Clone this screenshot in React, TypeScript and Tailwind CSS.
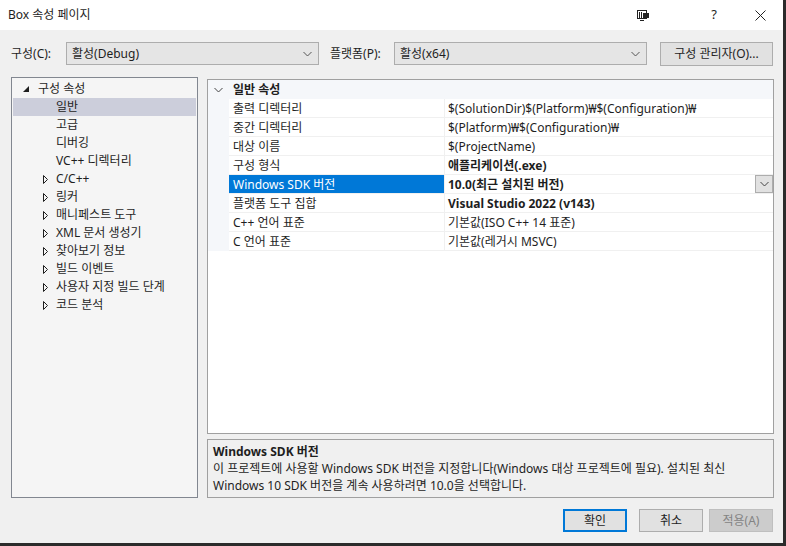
import React from 'react';

const font = "font-['Noto_Sans','Noto_Sans_CJK_KR',sans-serif]";

const Chevron: React.FC<{ className?: string }> = ({ className }) => (
  <svg className={className} width="9" height="6" viewBox="0 0 9 6" fill="none">
    <polyline points="0.5,1 4.5,5 8.5,1" stroke="currentColor" strokeWidth="1" />
  </svg>
);

const PinIcon: React.FC = () => (
  <svg width="12" height="11" viewBox="0 0 12 11" fill="none">
    <rect x="0.5" y="0.5" width="9" height="8" stroke="#222" />
    <line x1="2.5" y1="2" x2="2.5" y2="8" stroke="#222" />
    <line x1="4.5" y1="2" x2="4.5" y2="8" stroke="#222" />
    <rect x="6" y="3" width="6" height="5" fill="#222" />
    <line x1="3" y1="10.5" x2="7" y2="10.5" stroke="#222" />
  </svg>
);

const Expanded: React.FC = () => (
  <svg width="6" height="6" viewBox="0 0 6 6">
    <polygon points="6,0 6,6 0,6" fill="#1e1e1e" />
  </svg>
);

const Collapsed: React.FC = () => (
  <svg width="5" height="9" viewBox="0 0 5 9" fill="none">
    <polygon points="0.5,0.5 4.5,4.5 0.5,8.5" stroke="#1e1e1e" strokeWidth="1" />
  </svg>
);

const treeItems: { label: string; arrow: boolean; selected?: boolean }[] = [
  { label: '일반', arrow: false, selected: true },
  { label: '고급', arrow: false },
  { label: '디버깅', arrow: false },
  { label: 'VC++ 디렉터리', arrow: false },
  { label: 'C/C++', arrow: true },
  { label: '링커', arrow: true },
  { label: '매니페스트 도구', arrow: true },
  { label: 'XML 문서 생성기', arrow: true },
  { label: '찾아보기 정보', arrow: true },
  { label: '빌드 이벤트', arrow: true },
  { label: '사용자 지정 빌드 단계', arrow: true },
  { label: '코드 분석', arrow: true },
];

const props: { name: string; value: string; bold?: boolean; selected?: boolean }[] = [
  { name: '출력 디렉터리', value: '$(SolutionDir)$(Platform)₩$(Configuration)₩' },
  { name: '중간 디렉터리', value: '$(Platform)₩$(Configuration)₩' },
  { name: '대상 이름', value: '$(ProjectName)' },
  { name: '구성 형식', value: '애플리케이션(.exe)', bold: true },
  { name: 'Windows SDK 버전', value: '10.0(최근 설치된 버전)', bold: true, selected: true },
  { name: '플랫폼 도구 집합', value: 'Visual Studio 2022 (v143)', bold: true },
  { name: 'C++ 언어 표준', value: '기본값(ISO C++ 14 표준)' },
  { name: 'C 언어 표준', value: '기본값(레거시 MSVC)' },
];

export default function App() {
  return (
    <div className={`w-[786px] h-[546px] bg-[#2b2b2b] ${font} text-[12px] text-[#1e1e1e]`}>
      <div className="w-[783px] h-[543px] bg-[#f0f0f0] flex flex-col">
        {/* title bar */}
        <div className="h-[30px] bg-white flex items-center pl-[8px] shrink-0">
          <span className="flex-1 leading-none">Box 속성 페이지</span>
          <div className="w-[12px] flex justify-center mr-[62px]">
            <PinIcon />
          </div>
          <span className="text-[13px] mr-[38px]">?</span>
          <svg className="mr-[17px]" width="11" height="11" viewBox="0 0 11 11" fill="none">
            <path d="M0.5 0.5 L10.5 10.5 M10.5 0.5 L0.5 10.5" stroke="#222" strokeWidth="1" />
          </svg>
        </div>

        {/* config row */}
        <div className="flex items-center mt-[12px] h-[23px] pl-[11px]">
          <span className="w-[55px]">구성(C):</span>
          <div className="w-[253px] h-[23px] bg-[#e5e5e5] border border-[#adadad] flex items-center pl-[5px] pr-[6px]">
            <span className="flex-1">활성(Debug)</span>
            <Chevron className="text-[#555]" />
          </div>
          <span className="w-[64px] ml-[11px]">플랫폼(P):</span>
          <div className="w-[253px] h-[23px] bg-[#e5e5e5] border border-[#adadad] flex items-center pl-[5px] pr-[6px]">
            <span className="flex-1">활성(x64)</span>
            <Chevron className="text-[#555]" />
          </div>
          <button className="ml-[13px] w-[113px] h-[24px] bg-[#e1e1e1] border border-[#adadad] flex items-center justify-center">
            구성 관리자(O)...
          </button>
        </div>

        {/* main area */}
        <div className="flex mt-[12px] pl-[11px] h-[421px]">
          {/* tree */}
          <div className="w-[187px] h-[421px] border border-[#828790] bg-[#f5f5f5] pt-[2px] px-[1px]">
            <div className="h-[18px] flex items-center">
              <span className="w-[10px] ml-[10px] flex items-center">
                <Expanded />
              </span>
              <span className="ml-[5px]">구성 속성</span>
            </div>
            {treeItems.map((t) => (
              <div
                key={t.label}
                className={`h-[18px] flex items-center ${t.selected ? 'bg-[#cccedb]' : ''}`}
              >
                <span className="w-[5px] ml-[30px] flex items-center">{t.arrow && <Collapsed />}</span>
                <span className="ml-[8px]">{t.label}</span>
              </div>
            ))}
          </div>

          {/* right column */}
          <div className="ml-[9px] w-[567px] flex flex-col">
            <div className="h-[355px] mt-[2px] border border-[#a0a0a0] bg-white flex flex-col">
              <div className="h-[19px] bg-[#f5f7fa] flex items-center pt-[1px]">
                <span className="w-[21px] flex justify-center">
                  <Chevron className="text-[#444]" />
                </span>
                <span className="ml-[4px] font-bold">일반 속성</span>
              </div>
              {props.map((p) => (
                <div key={p.name} className="h-[19px] flex">
                  <div className="w-[21px] bg-[#f5f7fa]" />
                  <div
                    className={`w-[215px] border-b border-[#f0f0f0] flex items-center pl-[4px] pt-[1px] ${
                      p.selected ? 'bg-[#0078d7] text-white border-[#0078d7]' : ''
                    }`}
                  >
                    {p.name}
                  </div>
                  <div className="w-[1px] bg-[#f0f0f0]" />
                  <div className={`flex-1 border-b border-[#f0f0f0] flex items-center pl-[3px] ${p.bold ? 'font-bold' : ''}`}>
                    <span className="flex-1 pt-[1px]">{p.value}</span>
                    {p.selected && (
                      <span className="w-[18px] h-[18px] bg-[#e1e1e1] border border-[#adadad] flex items-center justify-center">
                        <Chevron className="text-[#444]" />
                      </span>
                    )}
                  </div>
                </div>
              ))}
              <div className="flex-1" />
            </div>

            <div className="mt-[5px] h-[59px] border border-[#a0a0a0] bg-[#f0f0f0] px-[5px] pt-[3px] leading-[17px]">
              <div className="font-bold">Windows SDK 버전</div>
              <div>
                이 프로젝트에 사용할 Windows SDK 버전을 지정합니다(Windows 대상 프로젝트에 필요). 설치된 최신
              </div>
              <div>Windows 10 SDK 버전을 계속 사용하려면 10.0을 선택합니다.</div>
            </div>
          </div>
        </div>

        {/* buttons */}
        <div className="flex justify-end mt-[11px] pr-[10px] gap-[12px]">
          <button className="w-[64px] h-[23px] bg-[#e1e1e1] border-2 border-[#0078d7] flex items-center justify-center">
            확인
          </button>
          <button className="w-[64px] h-[23px] bg-[#e1e1e1] border border-[#adadad] flex items-center justify-center">
            취소
          </button>
          <button className="-ml-[6px] w-[64px] h-[23px] bg-[#cccccc] border border-[#bfbfbf] text-[#838383] flex items-center justify-center">
            적용(A)
          </button>
        </div>
      </div>
    </div>
  );
}
